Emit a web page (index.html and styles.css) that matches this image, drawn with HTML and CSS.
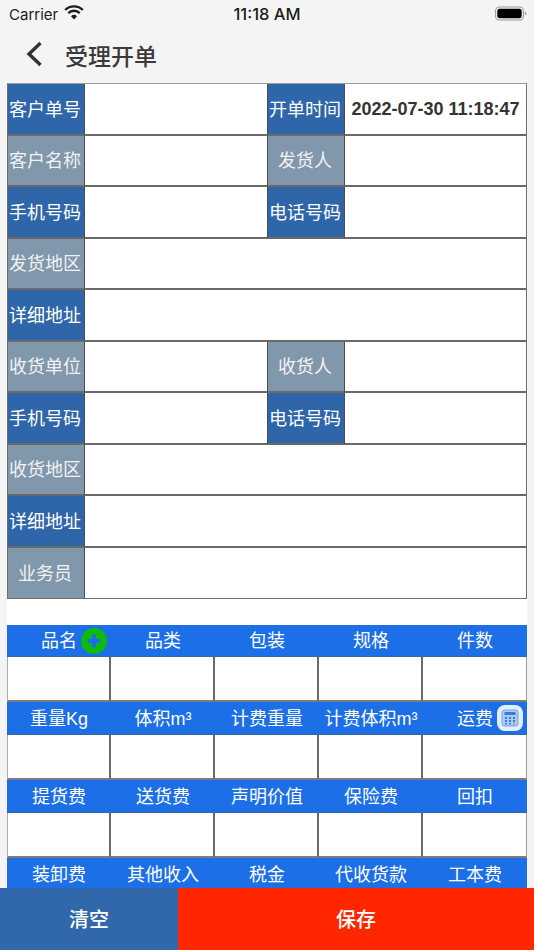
FILE: index.html
```html
<!DOCTYPE html>
<html lang="zh">
<head>
<meta charset="utf-8">
<title>受理开单</title>
<link rel="stylesheet" href="styles.css">
</head>
<body>
<div class="screen">
  <div class="status">
    <div class="status-left">
      <span>Carrier</span>
      <svg class="wifi" viewBox="0 0 20 15" width="20" height="15"><path d="M1.200 5a12.500 12.500 0 0 1 17.600 0" fill="none" stroke="#1c1c1c" stroke-width="2.400"/><path d="M4.300 8.200a8 8 0 0 1 11.400 0" fill="none" stroke="#1c1c1c" stroke-width="2.400"/><path d="M7 11.200l3 3.300 3-3.300a4.300 4.300 0 0 0-6 0z" fill="#1c1c1c"/></svg>
    </div>
    <div class="status-time">11:18 AM</div>
    <div class="status-right">
      <svg viewBox="0 0 32 15" width="32" height="15"><rect x=".6" y="1" width="27.800" height="13" rx="3.800" fill="none" stroke="#9a9a9a" stroke-width="1.100"/><rect x="2.300" y="2.700" width="24.400" height="9.600" rx="2.200" fill="#000"/><path d="M29.800 5.500c1 .3 1.500 1.100 1.500 2s-.5 1.700-1.500 2z" fill="#9a9a9a"/></svg>
    </div>
  </div>
  <div class="nav">
    <svg class="back" viewBox="0 0 18 26" width="18" height="26"><path d="M15.500 2 4 13l11.500 11" fill="none" stroke="#333" stroke-width="3.400"/></svg>
    <span class="nav-title">受理开单</span>
  </div>
  <div class="sheet">
    <div class="form">
      <div class="lbl blue">客户单号</div><div class="val"></div><div class="lbl mid blue">开单时间</div><div class="val date">2022-07-30 11:18:47</div>
      <div class="lbl grey">客户名称</div><div class="val"></div><div class="lbl mid grey">发货人</div><div class="val"></div>
      <div class="lbl blue">手机号码</div><div class="val"></div><div class="lbl mid blue">电话号码</div><div class="val"></div>
      <div class="lbl grey">发货地区</div><div class="val wide"></div>
      <div class="lbl blue">详细地址</div><div class="val wide"></div>
      <div class="lbl grey">收货单位</div><div class="val"></div><div class="lbl mid grey">收货人</div><div class="val"></div>
      <div class="lbl blue">手机号码</div><div class="val"></div><div class="lbl mid blue">电话号码</div><div class="val"></div>
      <div class="lbl grey">收货地区</div><div class="val wide"></div>
      <div class="lbl blue">详细地址</div><div class="val wide"></div>
      <div class="lbl grey last">业务员</div><div class="val wide last"></div>
    </div>
    <div class="goods">
      <div class="hd">品名<svg class="plus" viewBox="0 0 26 26" width="26" height="26"><circle cx="13" cy="13" r="13" fill="#0dbb0d"/><path d="M13 6.500v13M6.500 13h13" stroke="#1d6fe8" stroke-width="4"/></svg></div><div class="hd">品类</div><div class="hd">包装</div><div class="hd">规格</div><div class="hd">件数</div>
      <div class="in"></div><div class="in"></div><div class="in"></div><div class="in"></div><div class="in"></div>
      <div class="hd">重量Kg</div><div class="hd">体积m³</div><div class="hd">计费重量</div><div class="hd">计费体积m³</div><div class="hd">运费<span class="calc"><svg viewBox="0 0 18 18" width="18" height="18"><rect x="1" y="1" width="16" height="16" rx="2.500" fill="#a9cdfb" stroke="#6fa5ef"/><rect x="3.500" y="3" width="11" height="3" fill="#3f78d8"/><path d="M4 8h2v2H4zM8 8h2v2H8zM12 8h2v2h-2zM4 11h2v2H4zM8 11h2v2H8zM4 14h2v1.500H4zM8 14h2v1.500H8z" fill="#3f78d8"/><path d="M12 11h2v2h-2z" fill="#3f78d8"/><path d="M12 14h2v1.500h-2z" fill="#f08a24"/></svg></span></div>
      <div class="in"></div><div class="in"></div><div class="in"></div><div class="in"></div><div class="in"></div>
      <div class="hd">提货费</div><div class="hd">送货费</div><div class="hd">声明价值</div><div class="hd">保险费</div><div class="hd">回扣</div>
      <div class="in"></div><div class="in"></div><div class="in"></div><div class="in"></div><div class="in"></div>
      <div class="hd">装卸费</div><div class="hd">其他收入</div><div class="hd">税金</div><div class="hd">代收货款</div><div class="hd">工本费</div>
    </div>
  </div>
  <div class="actions">
    <div class="act clear">清空</div>
    <div class="act save">保存</div>
  </div>
</div>
</body>
</html>
```
FILE: styles.css
```css
* { box-sizing: border-box; }
html, body { margin: 0; padding: 0; }
body { font-family: "Liberation Sans", "Noto Sans CJK SC", sans-serif; }
.screen { position: relative; width: 534px; height: 950px; overflow: hidden; background: #f4f4f4; }
.status { height: 28px; padding: 0 7px 0 9px; display: grid; grid-template-columns: 1fr auto 1fr; align-items: center; font-size: 15px; color: #1c1c1c; font-family: "Inter", "Liberation Sans", sans-serif; }
.status-left { display: flex; align-items: center; gap: 6px; }
.wifi { margin-top: -3px; }
.status-time { font-weight: 500; font-size: 16.500px; margin-right: 2px; }
.status-right { display: flex; justify-content: flex-end; margin-top: -2px; }
.nav { height: 55px; display: flex; align-items: center; padding-left: 25px; }
.back { margin-top: -4px; }
.nav-title { margin-left: 22px; font-size: 23px; line-height: 24px; padding-bottom: 1px; font-weight: 500; color: #3a3a3a; font-family: "Noto Sans CJK SC", sans-serif; }
.sheet { margin: 0 7px; background: #fff; height: 867px; }
.form { display: grid; grid-template-columns: 77px 182px 78px 1fr; grid-template-rows: repeat(9, 51.500px) 50.500px; border: 1px solid #6f6f6f; border-top-color: #9c9c9c; }
.lbl, .val { border-bottom: 2px solid #6a6a6a; display: flex; align-items: center; }
.lbl.last, .val.last { border-bottom: 0; }
.lbl { justify-content: center; border-right: 1px solid #4c4c4c; color: #fff; font-size: 18px; line-height: 20px; padding: 2px 2px 0 0; white-space: nowrap; }
.mid { border-left: 1px solid #4c4c4c; }
.val { background: #fff; }
.blue { background: #2f66a9; }
.grey { background: #8097ac; color: #f2f2f2; }
.wide { grid-column: span 3; }
.date { justify-content: center; font-size: 18px; line-height: 20px; padding-top: 1px; font-weight: 700; color: #333; }
.goods { margin-top: 26px; display: grid; grid-template-columns: repeat(5, 1fr); grid-template-rows: 32px 45px 33px 45px 33px 45px 33px; }
.hd { position: relative; background: #1d6fe8; color: #fff; display: flex; align-items: center; justify-content: center; font-size: 18px; line-height: 20px; padding-top: 1px; white-space: nowrap; border-bottom: 1px solid #3c66a0; }
.plus { position: absolute; left: 74px; top: 3px; }
.in { background: #fff; border-right: 2px solid #6a6a6a; border-bottom: 2px solid #7d7d7d; }
.in:nth-child(5n) { border-right: 1px solid #999; }
.in:nth-child(5n+1) { border-left: 1px solid #aaa; }
.calc { position: absolute; right: 4px; top: 3px; width: 26px; height: 26px; border-radius: 8px; background: #e3effd; display: flex; align-items: center; justify-content: center; }
.actions { position: absolute; left: 0; right: 0; bottom: 0; height: 62px; display: flex; }
.act { display: flex; align-items: center; justify-content: center; color: #fff; font-size: 20px; line-height: 22px; padding-bottom: 1px; font-weight: 500; font-family: "Noto Sans CJK SC", sans-serif; }
.clear { width: 178px; background: #3068ab; }
.save { flex: 1; background: #ff2600; }
```
